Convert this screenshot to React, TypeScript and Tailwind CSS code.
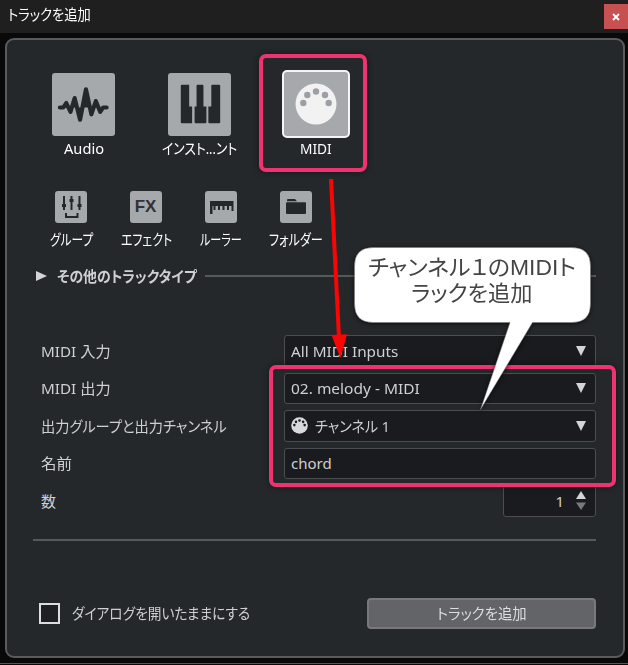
import { useLayoutEffect, useRef, useState } from "react";
import type { ReactNode } from "react";

// Narrow UI lettering: the text is condensed to a given width.
function Fit({
  children,
  className = "",
  width,
}: {
  children: ReactNode;
  className?: string;
  width: number;
}) {
  const ref = useRef<HTMLSpanElement>(null);
  const [scale, setScale] = useState(1);

  useLayoutEffect(() => {
    if (ref.current) setScale(width / ref.current.offsetWidth);
  }, [width]);

  return (
    <span className={`block whitespace-nowrap ${className}`} style={{ width }}>
      <span
        className="inline-block origin-left [font-feature-settings:'palt']"
        ref={ref}
        style={{ transform: `scaleX(${scale})` }}
      >
        {children}
      </span>
    </span>
  );
}

function AudioIcon() {
  return (
    <svg className="size-full" viewBox="0 0 64 64">
      <path
        d="M8 35H11.500L14.500 30.500L18.800 39.500L23 25.500L28.500 47.500L34.500 16.500L40 42L44.500 28.500L49 39.500L52 35H55.500"
        fill="#25282b"
        stroke="#25282b"
        strokeLinecap="round"
        strokeLinejoin="round"
        strokeWidth="4.2"
      />
    </svg>
  );
}

function KeysIcon() {
  return (
    <svg className="size-full" fill="#25282b" viewBox="0 0 64 64">
      <path d="M14 12h7.500v22h3v17H14q-1 0-1-1V13q0-1 1-1z" />
      <path d="M30 12h5q1 0 1 1v21h3v16q0 1-1 1H28q-1 0-1-1V34h2V13q0-1 1-1z" />
      <path d="M45 12h7q1 0 1 1v37q0 1-1 1H42q-1 0-1-1V34h3V13q0-1 1-1z" />
    </svg>
  );
}

function DinIcon({ hole, plug }: { hole: string; plug: string }) {
  return (
    <svg className="size-full" viewBox="0 0 42 42">
      <circle cx="21" cy="21" fill={plug} r="20.5" />
      <g fill={hole}>
        <circle cx="8.3" cy="20" r="3.2" />
        <circle cx="12.3" cy="12" r="3.2" />
        <circle cx="21" cy="8.5" r="3.2" />
        <circle cx="30" cy="12" r="3.2" />
        <circle cx="33.7" cy="20" r="3.2" />
      </g>
    </svg>
  );
}

function FaderIcon() {
  return (
    <svg className="size-full" fill="none" stroke="#25282b" viewBox="0 0 32 32">
      <path d="M9 5v14M16.500 5v14M24.500 5v14" strokeWidth="2" />
      <path d="M7 14.500h4M14.500 9.500h4M22.500 14.500h4" strokeWidth="3" />
      <path d="M11 22v4h11.500v-4" strokeWidth="2" />
    </svg>
  );
}

function RulerIcon() {
  return (
    <svg className="size-full" fill="#25282b" viewBox="0 0 32 32">
      <path d="M5 10h23.500v10h-2v-5h-2.500V19h-2v-4h-2.500V19h-2v-4h-2.500V19h-2v-4h-2.500V19h-2v-4H7.500v8H5z" />
    </svg>
  );
}

function FolderIcon() {
  return (
    <svg className="size-full" fill="#25282b" viewBox="0 0 32 32">
      <path d="M8 8h7l2 2.300H7V9q0-1 1-1z" />
      <path d="M7 11.200h18q1 0 1 1V22q0 1-1 1H7q-1 0-1-1v-9.800q0-1 1-1z" />
    </svg>
  );
}

function DownArrow() {
  return (
    <svg className="h-[10px] w-[10px]" viewBox="0 0 10 10">
      <path d="M0 0H10L5 10Z" fill="#d3d4d6" />
    </svg>
  );
}

const smallTypes = [
  { icon: <FaderIcon />, label: "グループ", width: 43 },
  {
    icon: (
      <span className="font-['Liberation_Sans'] text-[17px] leading-8 font-bold text-[#303235]">FX</span>
    ),
    label: "エフェクト",
    width: 51,
  },
  { icon: <RulerIcon />, label: "ルーラー", width: 42 },
  { icon: <FolderIcon />, label: "フォルダー", width: 54 },
];

function LargeType({ children, label, width }: { children: ReactNode; label: string; width: number }) {
  return (
    <div className="flex w-[100px] flex-col items-center">
      <div className="size-[63px] rounded-[3px] bg-[#a6a9ac]">{children}</div>
      <Fit className="mt-[2px] ml-px leading-5 text-white" width={width}>
        {label}
      </Fit>
    </div>
  );
}

function Row({ children, label, width }: { children: ReactNode; label: string; width: number }) {
  return (
    <div className="flex h-[31.500px] items-center justify-between pl-2">
      <Fit width={width}>{label}</Fit>
      {children}
    </div>
  );
}

function Field({ arrow = true, children }: { arrow?: boolean; children: ReactNode }) {
  return (
    <div className="flex h-full w-[312px] items-center justify-between rounded-[3px] border border-[#4b4d50] bg-[#1a1b1f] pr-[9px] pl-[6px]">
      {children}
      {arrow ? <DownArrow /> : null}
    </div>
  );
}

function Annotations() {
  return (
    <>
      <div className="absolute top-[54px] left-[259px] h-[118px] w-[108px] rounded-[7px] border-4 border-[#ef3370] shadow-[0_0_6px_rgba(0,0,0,0.45)]" />
      <div className="absolute top-[365px] left-[269px] h-[121.500px] w-[346.500px] rounded-[7px] border-4 border-[#ef3370] shadow-[0_0_6px_rgba(0,0,0,0.45)]" />
      <svg className="absolute top-0 left-0 h-[665px] w-[628px]" viewBox="0 0 628 665">
        <path d="M331 179L339 337" stroke="#fa0505" strokeWidth="4" />
        <path d="M331.500 335L347 334.200L340.400 358Z" fill="#fa0505" />
        <path
          className="drop-shadow-[0_1px_2px_rgba(0,0,0,0.7)]"
          d="M373 247.500H572Q590.500 247.500 590.500 266V304Q590.500 322.500 572 322.500H532.500L480.500 409.500L510 322.500H373Q354.500 322.500 354.500 304V266Q354.500 247.500 373 247.500Z"
          fill="white"
          stroke="#777"
          strokeWidth="0.5"
        />
      </svg>
      <div className="absolute top-[255px] left-[355px] flex w-[235px] flex-col items-center font-['Liberation_Sans','Noto_Sans_CJK_JP',sans-serif] text-[22px] leading-[26px] text-[#444]">
        <Fit className="-ml-[1px]" width={208}>
          チャンネル１のMIDIト
        </Fit>
        <Fit className="-ml-[2px]" width={121}>
          ラックを追加
        </Fit>
      </div>
    </>
  );
}

export default function App() {
  return (
    <div className="relative h-[665px] w-[628px] overflow-hidden bg-[#09090a] font-['Noto_Sans','Noto_Sans_CJK_JP',sans-serif] text-[15px] leading-5 text-[#cfd0d2]">
      <header className="flex h-[33px] items-start justify-between bg-[#1f1f1f]">
        <Fit className="mt-1 ml-2 text-white" width={83}>
          トラックを追加
        </Fit>
        <button className="mt-1 flex h-[25px] w-6 items-center justify-center bg-[#c75050]" type="button">
          <svg className="size-[8px]" viewBox="0 0 8 8">
            <path d="M1 1L7 7M7 1L1 7" stroke="white" strokeWidth="1.8" />
          </svg>
        </button>
      </header>

      <main className="mt-[5px] ml-[5px] h-[620px] w-[620px] rounded-[9px] border-2 border-[#5a5b5e] bg-[#25282b] pr-[27px] pl-[26px]">
        <div className="flex h-[118px] items-start gap-4 pt-[33px]">
          <LargeType label="Audio" width={40}>
            <AudioIcon />
          </LargeType>
          <LargeType label="インスト...ント" width={75}>
            <KeysIcon />
          </LargeType>
          <div className="-mt-[3px] ml-px flex w-[100px] flex-col items-center">
            <div className="size-[68px] rounded-[5px] border-[2.500px] border-[#f5f5f6] bg-[#a6a9ac] p-[11px]">
              <DinIcon hole="#9c9fa3" plug="#f2f2f3" />
            </div>
            <Fit className="leading-5 text-white" width={32}>
              MIDI
            </Fit>
          </div>
        </div>

        <div className="mt-[33px] flex">
          {smallTypes.map((type) => (
            <div className="flex w-[75px] flex-col items-center" key={type.label}>
              <div className="flex size-8 items-center justify-center rounded-[3px] bg-[#a6a9ac]">{type.icon}</div>
              <Fit className="mt-[6px] ml-px text-[15px] text-white" width={type.width}>
                {type.label}
              </Fit>
            </div>
          ))}
        </div>

        <div className="mt-[17px] flex h-5 items-center">
          <svg className="ml-[3px] h-[10px] w-[11px]" viewBox="0 0 11 10">
            <path d="M0 0L11 5L0 10Z" fill="#d3d4d6" />
          </svg>
          <Fit className="ml-[10px] font-semibold" width={140}>
            その他のトラックタイプ
          </Fit>
          <div className="ml-2 h-[2px] flex-1 bg-[#56585b]" />
        </div>

        <div className="mt-[49px] flex flex-col gap-[6px]">
          <Row label="MIDI 入力" width={70}>
            <Field>
              <Fit width={107}>All MIDI Inputs</Fit>
            </Field>
          </Row>
          <Row label="MIDI 出力" width={70}>
            <Field>
              <Fit width={129}>02. melody - MIDI</Fit>
            </Field>
          </Row>
          <Row label="出力グループと出力チャンネル" width={186}>
            <Field>
              <div className="flex items-center gap-[7px]">
                <div className="size-[17px]">
                  <DinIcon hole="#1a1b1f" plug="#d8d9da" />
                </div>
                <Fit width={75}>チャンネル 1</Fit>
              </div>
            </Field>
          </Row>
          <Row label="名前" width={31}>
            <Field arrow={false}>
              <Fit width={41}>chord</Fit>
            </Field>
          </Row>
          <Row label="数" width={15}>
            <div className="flex h-full w-[93px] items-center justify-end gap-3 rounded-[3px] border border-[#4b4d50] bg-[#1a1b1f] pr-[9px]">
              <span>1</span>
              <svg className="h-[19px] w-[10px]" viewBox="0 0 10 19">
                <path d="M0 8L5 0L10 8Z" fill="#d3d4d6" />
                <path d="M0 11.500H10L5 19Z" fill="#77797c" />
              </svg>
            </div>
          </Row>
        </div>

        <div className="mt-[22px] h-[2px] bg-[#56585b]" />

        <div className="mt-[57px] flex h-[31px] items-center justify-between">
          <label className="flex items-center gap-3">
            <span className="ml-[6px] size-[21px] border-2 border-[#dcdddf] bg-[#1f2024]" />
            <Fit width={178}>ダイアログを開いたままにする</Fit>
          </label>
          <button
            className="flex h-full w-[229px] items-center justify-center rounded-[4px] border-2 border-[#77797c] bg-[#636467]"
            type="button"
          >
            <Fit className="text-[#dcdddf]" width={90}>
              トラックを追加
            </Fit>
          </button>
        </div>
      </main>
      <div className="mt-[5px] h-px bg-[#55565a]" />

      <Annotations />
    </div>
  );
}
